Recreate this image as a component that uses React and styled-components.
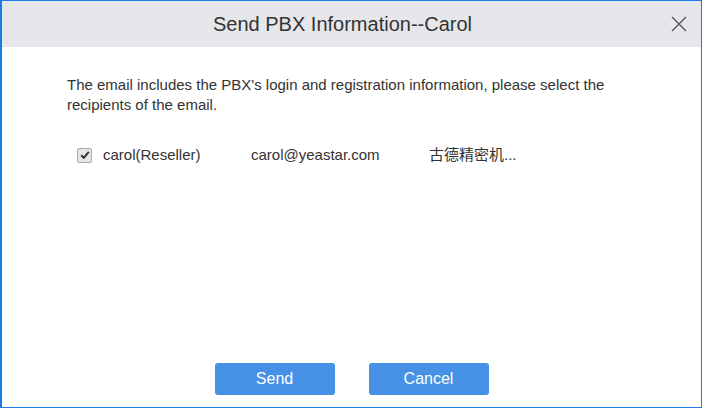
import React from "react";
import styled, { createGlobalStyle } from "styled-components";

const GlobalStyle = createGlobalStyle`
  html, body {
    margin: 0;
    padding: 0;
    background: #fff;
  }
  body {
    font-family: "Liberation Sans", Arial, "Noto Sans CJK SC", sans-serif;
  }
`;

const Dialog = styled.div`
  box-sizing: border-box;
  width: 702px;
  height: 408px;
  border: 1px solid #1b7ce6;
  border-left-width: 2px;
  display: flex;
  flex-direction: column;
  background: #fff;
`;

const Header = styled.div`
  position: relative;
  height: 46px;
  background: #e6e7ea;
  display: flex;
  align-items: center;
  justify-content: center;
  padding-right: 18px;
`;

const Title = styled.h2`
  margin: 0;
  font-size: 20px;
  font-weight: normal;
  color: #333;
`;

const Close = styled.button`
  position: absolute;
  right: 12px;
  top: 13px;
  width: 20px;
  height: 20px;
  padding: 0;
  border: none;
  background: transparent;
  cursor: pointer;
  svg {
    display: block;
  }
`;

const Body = styled.div`
  flex: 1;
  padding: 28px 66px 0 65px;
  color: #333;
  font-size: 15px;
  line-height: 20px;
`;

const Intro = styled.p`
  margin: 0;
`;

const Recipient = styled.label`
  display: flex;
  align-items: center;
  margin-top: 29px;
  padding-left: 10px;
  height: 22px;
`;

const Check = styled.span`
  box-sizing: border-box;
  width: 15px;
  height: 15px;
  margin-right: 11px;
  border: 1px solid #a9a9a9;
  border-radius: 2px;
  background: #e6e6e6;
  display: flex;
  align-items: center;
  justify-content: center;
`;

const Cell = styled.span`
  width: ${(p) => p.$w}px;
  flex-shrink: 0;
  white-space: nowrap;
  overflow: hidden;
`;

const Footer = styled.div`
  display: flex;
  justify-content: center;
  gap: 34px;
  padding-bottom: 12px;
`;

const Button = styled.button`
  width: 120px;
  height: 32px;
  border: none;
  border-radius: 3px;
  background: #4691e5;
  color: #fff;
  font-family: "Liberation Sans", Arial, sans-serif;
  font-size: 16px;
  cursor: pointer;
`;

export default function App() {
  return (
    <>
      <GlobalStyle />
      <Dialog>
        <Header>
          <Title>Send PBX Information--Carol</Title>
          <Close aria-label="close">
            <svg width="20" height="20" viewBox="0 0 20 20">
              <path
                d="M3 3 L17 17 M17 3 L3 17"
                stroke="#555"
                strokeWidth="1.4"
                fill="none"
              />
            </svg>
          </Close>
        </Header>
        <Body>
          <Intro>
            The email includes the PBX's login and registration information,
            please select the recipients of the email.
          </Intro>
          <Recipient>
            <Check>
              <svg width="10" height="10" viewBox="0 0 10 10">
                <path
                  d="M1.2 5.2 L3.8 7.8 L8.8 1.8"
                  stroke="#333"
                  strokeWidth="2"
                  fill="none"
                />
              </svg>
            </Check>
            <Cell $w={148}>carol(Reseller)</Cell>
            <Cell $w={178}>carol@yeastar.com</Cell>
            <Cell $w={120}>古德精密机...</Cell>
          </Recipient>
        </Body>
        <Footer>
          <Button>Send</Button>
          <Button>Cancel</Button>
        </Footer>
      </Dialog>
    </>
  );
}
